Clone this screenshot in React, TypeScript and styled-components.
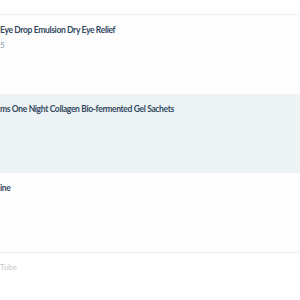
import React from "react";
import styled, { createGlobalStyle } from "styled-components";

const GlobalStyle = createGlobalStyle`
  html, body {
    margin: 0;
    padding: 0;
    background: #ffffff;
  }
  body {
    font-family: Lato, "Liberation Sans", sans-serif;
    overflow: hidden;
  }
`;

const Page = styled.div`
  width: 300px;
  height: 300px;
  display: flex;
  flex-direction: column;
  overflow: hidden;
`;

const TopBar = styled.div`
  height: 14px;
  border-bottom: 1px solid #eceef0;
  box-shadow: 0 1px 2px rgba(0, 0, 0, 0.03);
`;

const List = styled.div`
  display: flex;
  flex-direction: column;
  border-bottom: 1px solid #eef0f2;
`;

const Item = styled.div<{ $shaded?: boolean }>`
  height: 79px;
  box-sizing: border-box;
  padding-top: 11px;
  background: ${(p) => (p.$shaded ? "#edf2f5" : "#fdfdfe")};
`;

const Title = styled.div`
  font-size: 8.5px;
  font-weight: 700;
  line-height: 9px;
  letter-spacing: -0.35px;
  color: #33495f;
  white-space: nowrap;
`;

const Meta = styled.div`
  margin-top: 6px;
  font-size: 8px;
  line-height: 9px;
  color: #8b98a5;
`;

const Footer = styled.div`
  padding-top: 10px;
  font-size: 8px;
  line-height: 9px;
  color: #c3c8cd;
`;

const items = [
  { title: "Eye Drop Emulsion Dry Eye Relief", meta: "5" },
  { title: "ms One Night Collagen Bio-fermented Gel Sachets" },
  { title: "ine" },
];

export default function App() {
  return (
    <Page>
      <GlobalStyle />
      <TopBar />
      <List>
        {items.map((item, i) => (
          <Item key={item.title} $shaded={i === 1}>
            <Title>{item.title}</Title>
            {item.meta && <Meta>{item.meta}</Meta>}
          </Item>
        ))}
      </List>
      <Footer>Tube</Footer>
    </Page>
  );
}
